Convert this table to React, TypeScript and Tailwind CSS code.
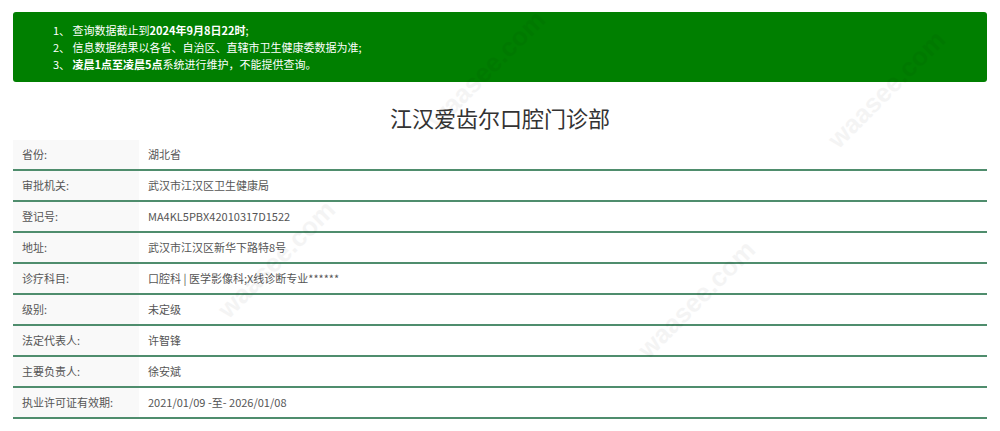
import React from "react";

const rows: [string, string][] = [
  ["省份:", "湖北省"],
  ["审批机关:", "武汉市江汉区卫生健康局"],
  ["登记号:", "MA4KL5PBX42010317D1522"],
  ["地址:", "武汉市江汉区新华下路特8号"],
  ["诊疗科目:", "口腔科 | 医学影像科;X线诊断专业******"],
  ["级别:", "未定级"],
  ["法定代表人:", "许智锋"],
  ["主要负责人:", "徐安斌"],
  ["执业许可证有效期:", "2021/01/09 -至- 2026/01/08"],
];

const marks: [number, number][] = [
  [410, 50],
  [200, 240],
  [620, 280],
  [810, 70],
];

export default function App() {
  return (
    <div
      className="relative w-[1000px] h-[431px] overflow-hidden bg-white"
      style={{ fontFamily: '"Microsoft YaHei","Noto Sans CJK SC","Noto Sans",sans-serif' }}
    >
      <div className="mx-[13px] mt-[12px] h-[70px] rounded-[3px] bg-[#007f00] pl-[40px] pt-[10px] text-[11px] leading-[17px] text-white">
        <div>
          1、 查询数据截止到<b>2024年9月8日22时</b>;
        </div>
        <div>2、 信息数据结果以各省、自治区、直辖市卫生健康委数据为准;</div>
        <div>
          3、 <b>凌晨1点至凌晨5点</b>系统进行维护，不能提供查询。
        </div>
      </div>
      <h1 className="mt-[20px] mb-[8px] text-center text-[22px] leading-[30px] text-[#333]">
        江汉爱齿尔口腔门诊部
      </h1>
      <div className="mx-[13px] text-[11px] text-[#555]">
        {rows.map(([k, v]) => (
          <div key={k} className="flex h-[31px] border-b-2 border-[#4f8d6d]">
            <div className="flex w-[126px] items-center bg-[#f9f9f9] pl-[9px]">{k}</div>
            <div className="flex items-center pl-[9px]">{v}</div>
          </div>
        ))}
      </div>
      {marks.map(([x, y], i) => (
        <div
          key={i}
          className="pointer-events-none absolute text-[26px] font-bold text-[#000] opacity-[0.04]"
          style={{ left: x, top: y, transform: "rotate(-45deg)", fontFamily: "Arial, sans-serif" }}
        >
          waasee.com
        </div>
      ))}
    </div>
  );
}
